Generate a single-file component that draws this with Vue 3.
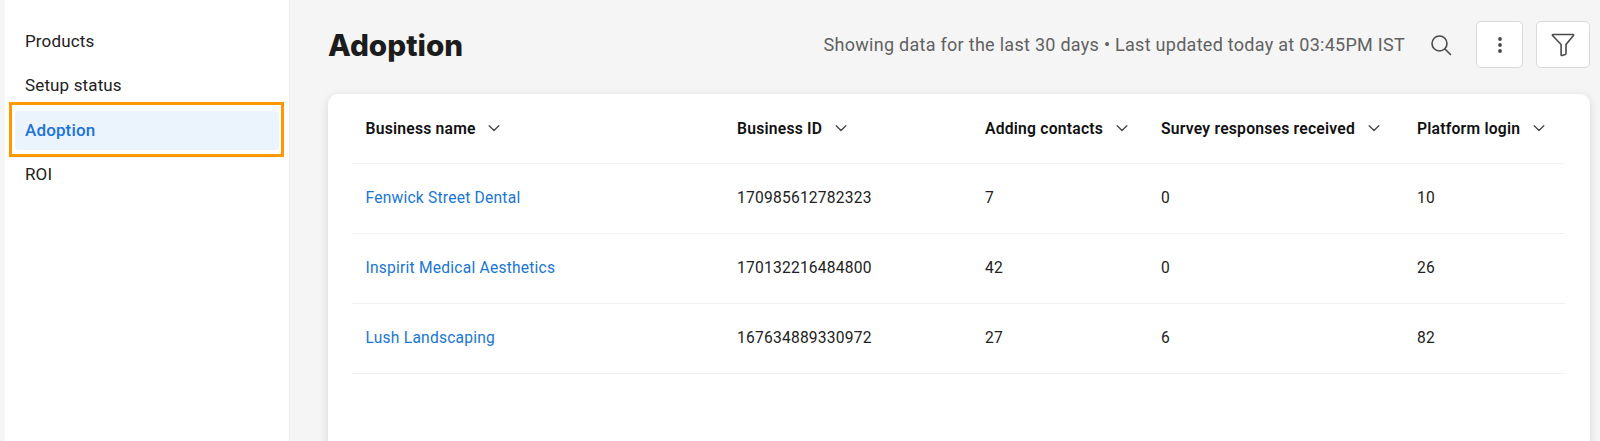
<script setup>
const menu = [
  { label: 'Products' },
  { label: 'Setup status' },
  { label: 'Adoption', active: true },
  { label: 'ROI' },
]

const columns = ['Business name', 'Business ID', 'Adding contacts', 'Survey responses received', 'Platform login']

const rows = [
  { name: 'Fenwick Street Dental', id: '170985612782323', contacts: 7, responses: 0, logins: 10 },
  { name: 'Inspirit Medical Aesthetics', id: '170132216484800', contacts: 42, responses: 0, logins: 26 },
  { name: 'Lush Landscaping', id: '167634889330972', contacts: 27, responses: 6, logins: 82 },
]
</script>

<template>
  <div class="page">
    <aside class="sidebar">
      <div v-for="item in menu" :key="item.label" class="menu-slot" :class="{ highlighted: item.active }">
        <a class="menu-item" :class="{ active: item.active }">{{ item.label }}</a>
      </div>
    </aside>

    <main class="main">
      <header class="topbar">
        <h1>Adoption</h1>
        <div class="tools">
          <span class="updated">Showing data for the last 30 days • Last updated today at 03:45PM IST</span>
          <svg class="search" width="24" height="24" viewBox="0 0 24 24" fill="none" stroke="#4a4a4a" stroke-width="1.6" stroke-linecap="round">
            <circle cx="10.5" cy="10.5" r="7.500" />
            <path d="M16 16l5.500 5.500" />
          </svg>
          <button class="icon-btn more">
            <svg width="24" height="24" viewBox="0 0 24 24" fill="#4a4a4a">
              <circle cx="12" cy="6" r="1.900" />
              <circle cx="12" cy="12" r="1.900" />
              <circle cx="12" cy="18" r="1.900" />
            </svg>
          </button>
          <button class="icon-btn filter">
            <svg width="26" height="26" viewBox="0 0 26 26" fill="none" stroke="#4a4a4a" stroke-width="1.6" stroke-linejoin="round">
              <path d="M3 2.500h20c.6 0 .8.6.5 1L16 12.500v9c0 .5-.2.8-.7 1l-3.300 1c-.5.1-.9-.3-.9-.8v-10.200L2.500 3.500c-.3-.4-.1-1 .5-1Z" />
            </svg>
          </button>
        </div>
      </header>

      <section class="card">
        <div class="row head">
          <div v-for="col in columns" :key="col" class="cell">
            <span>{{ col }}</span>
            <svg class="chevron" width="14" height="14" viewBox="0 0 14 14" fill="none" stroke="#444" stroke-width="1.300" stroke-linecap="round" stroke-linejoin="round">
              <path d="M2.200 4.700 7 9.500l4.800-4.800" />
            </svg>
          </div>
        </div>
        <div v-for="row in rows" :key="row.id" class="row">
          <div class="cell"><a class="link">{{ row.name }}</a></div>
          <div class="cell">{{ row.id }}</div>
          <div class="cell">{{ row.contacts }}</div>
          <div class="cell">{{ row.responses }}</div>
          <div class="cell">{{ row.logins }}</div>
        </div>
      </section>
    </main>
  </div>
</template>

<style>
html, body {
  margin: 0;
  height: 100%;
  overflow: hidden;
  background: #f5f5f5;
}
</style>

<style scoped>
.page {
  display: flex;
  height: 441px;
  overflow: hidden;
  padding-left: 5px;
  box-sizing: border-box;
  background: #f5f5f5;
  font-family: Roboto, "Liberation Sans", sans-serif;
  color: #212121;
}

.sidebar {
  width: 285px;
  flex-shrink: 0;
  box-sizing: border-box;
  padding: 19px 5px 0;
  background: #fff;
  border-right: 1px solid #ececec;
}

.menu-slot {
  height: 44.500px;
  display: flex;
  align-items: center;
  padding: 0 5px;
  box-sizing: border-box;
  position: relative;
}

.menu-slot.highlighted::after {
  content: "";
  position: absolute;
  left: -1px;
  right: 0;
  top: -6px;
  bottom: -4.500px;
  border: 3.500px solid #ff9800;
}

.menu-item {
  flex: 1;
  padding: 9px 10px;
  font-size: 17px;
  line-height: 21px;
  letter-spacing: 0.14px;
  border-radius: 4px;
}

.menu-item.active {
  background: #ebf3fc;
  color: #1a73d9;
  font-weight: 500;
}

.main {
  flex: 1;
  min-width: 0;
  padding: 0 10px 0 38px;
}

.topbar {
  height: 94px;
  display: flex;
  justify-content: space-between;
  align-items: flex-start;
}

h1 {
  margin: 27px 0 0;
  font-family: Inter, "Open Sans", sans-serif;
  font-size: 29.700px;
  line-height: 36px;
  font-weight: 800;
  color: #1c1c1c;
}

.tools {
  display: flex;
  align-items: center;
  margin-top: 21px;
  height: 47px;
}

.updated {
  font-size: 18px;
  color: #616161;
  letter-spacing: 0.28px;
}

.search {
  margin: 0 0 0 24px;
}

.icon-btn {
  display: flex;
  align-items: center;
  justify-content: center;
  height: 47px;
  padding: 0;
  box-sizing: border-box;
  background: #fff;
  border: 1px solid #d9d9d9;
  border-radius: 5px;
}

.more {
  width: 47px;
  margin-left: 23px;
}

.filter {
  width: 54px;
  margin-left: 13px;
}

.card {
  height: 360px;
  box-sizing: border-box;
  padding: 0 25px 0 24px;
  background: #fff;
  border-radius: 10px 10px 0 0;
  box-shadow: 0 2px 10px rgba(0, 0, 0, 0.12);
}

.row {
  display: grid;
  grid-template-columns: 371.500px 248px 176px 256px 1fr;
  align-items: center;
  height: 70.200px;
  border-bottom: 1px solid #f2f2f2;
  box-sizing: border-box;
  font-size: 15.600px;
  color: #212121;
  letter-spacing: 0.22px;
}

.row.head {
  height: 69.500px;
  font-size: 15.700px;
  font-weight: 600;
  color: #111;
}

.cell {
  display: flex;
  align-items: center;
  padding-left: 13.500px;
  white-space: nowrap;
}

.chevron {
  margin-left: 11.500px;
}

.link {
  color: #1976d2;
}
</style>
